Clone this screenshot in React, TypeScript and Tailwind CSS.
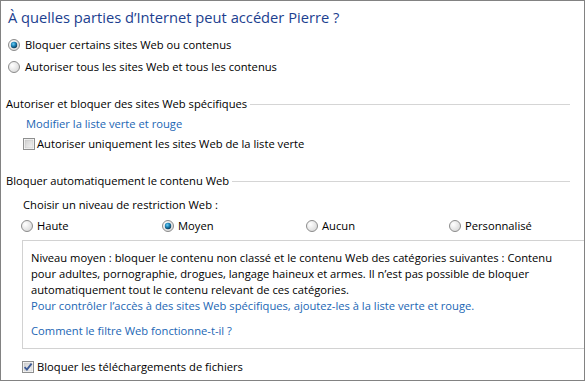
import React, { useId } from "react";

const FONT = { fontFamily: '"Open Sans", "Noto Sans", sans-serif' };

function Radio({ checked = false }: { checked?: boolean }) {
  const id = useId().replace(/:/g, "");
  return (
    <svg width="12" height="12" viewBox="0 0 12 12" className="shrink-0">
      <defs>
        <radialGradient id={`bg${id}`} cx="0.35" cy="0.35" r="0.8">
          <stop offset="0" stopColor="#ffffff" />
          <stop offset="1" stopColor="#d4d4d4" />
        </radialGradient>
        <radialGradient id={`dt${id}`} cx="0.4" cy="0.35" r="0.7">
          <stop offset="0" stopColor="#6fd0f5" />
          <stop offset="0.5" stopColor="#1b7fb3" />
          <stop offset="1" stopColor="#0d2f47" />
        </radialGradient>
      </defs>
      <circle cx="6" cy="6" r="5.5" fill={`url(#bg${id})`} stroke="#8c8c8c" strokeWidth="1" />
      {checked && <circle cx="6" cy="6" r="3.2" fill={`url(#dt${id})`} />}
    </svg>
  );
}

function Checkbox({ checked = false }: { checked?: boolean }) {
  const id = useId().replace(/:/g, "");
  return (
    <svg width="12" height="12" viewBox="0 0 12 12" className="shrink-0">
      <defs>
        <linearGradient id={`cb${id}`} x1="0" y1="0" x2="1" y2="1">
          <stop offset="0" stopColor="#cfcfcf" />
          <stop offset="1" stopColor="#f4f4f4" />
        </linearGradient>
      </defs>
      <rect x="0.5" y="0.5" width="11" height="11" fill="#fff" stroke="#8e8f8f" />
      <rect x="2" y="2" width="8" height="8" fill={`url(#cb${id})`} stroke="#c4c4c4" strokeWidth="0.6" />
      {checked && (
        <path d="M2.6 6.2 L4.9 8.6 L9.6 2.6" fill="none" stroke="#3c5a96" strokeWidth="1.9" />
      )}
    </svg>
  );
}

function SectionHeader({ children }: { children: React.ReactNode }) {
  return (
    <div className="flex items-center h-[20px] pl-[5px] pr-[14px]">
      <span className="whitespace-nowrap text-black">{children}</span>
      <div className="flex-1 h-px bg-[#d5d5d5] ml-[3px]" />
    </div>
  );
}

export default function App() {
  return (
    <div
      className="w-[585px] h-[381px] border border-[#828282] bg-white text-[11.2px] text-black overflow-hidden"
      style={FONT}
    >
      <div className="h-[22px] mt-[5px] pl-[7px] flex items-center text-[14.7px] text-[#1c3f8f] whitespace-nowrap">
        À quelles parties d’Internet peut accéder Pierre ?
      </div>

      <div className="mt-[6px] h-[22px] pl-[7px] flex items-center gap-[5px]">
        <Radio checked />
        <span>Bloquer certains sites Web ou contenus</span>
      </div>
      <div className="h-[22px] pl-[7px] flex items-center gap-[5px]">
        <Radio />
        <span>Autoriser tous les sites Web et tous les contenus</span>
      </div>

      <div className="mt-[16px]">
        <SectionHeader>Autoriser et bloquer des sites Web spécifiques</SectionHeader>
      </div>
      <div className="h-[20px] pl-[25px] flex items-center text-[#1b66b4]">
        Modifier la liste verte et rouge
      </div>
      <div className="h-[20px] pl-[22px] flex items-center gap-[2px]">
        <Checkbox />
        <span>Autoriser uniquement les sites Web de la liste verte</span>
      </div>

      <div className="mt-[17px]">
        <SectionHeader>Bloquer automatiquement le contenu Web</SectionHeader>
      </div>
      <div className="mt-[4px] h-[20px] pl-[22px] flex items-center">
        Choisir un niveau de restriction Web :
      </div>
      <div className="mt-[1px] h-[20px] pl-[20px] flex items-center">
        <div className="w-[141px] flex items-center gap-[4px]">
          <Radio />
          <span>Haute</span>
        </div>
        <div className="w-[144px] flex items-center gap-[4px]">
          <Radio checked />
          <span>Moyen</span>
        </div>
        <div className="w-[143px] flex items-center gap-[4px]">
          <Radio />
          <span>Aucun</span>
        </div>
        <div className="flex items-center gap-[4px]">
          <Radio />
          <span>Personnalisé</span>
        </div>
      </div>

      <div className="mt-[4px] ml-[21px] mr-[-2px] border border-[#d2d2d2] pt-[9px] pb-[9px] pl-[8px] leading-[16px]">
        <div className="whitespace-nowrap">
          Niveau moyen : bloquer le contenu non classé et le contenu Web des catégories suivantes : Contenu
        </div>
        <div className="whitespace-nowrap">
          pour adultes, pornographie, drogues, langage haineux et armes. Il n’est pas possible de bloquer
        </div>
        <div className="whitespace-nowrap">
          automatiquement tout le contenu relevant de ces catégories.
        </div>
        <div className="whitespace-nowrap text-[#1b66b4]">
          Pour contrôler l’accès à des sites Web spécifiques, ajoutez-les à la liste verte et rouge.
        </div>
        <div className="mt-[9px] whitespace-nowrap text-[#1b66b4]">
          Comment le filtre Web fonctionne-t-il ?
        </div>
      </div>

      <div className="mt-[8px] h-[20px] pl-[21px] flex items-center gap-[3px]">
        <Checkbox checked />
        <span>Bloquer les téléchargements de fichiers</span>
      </div>
    </div>
  );
}
